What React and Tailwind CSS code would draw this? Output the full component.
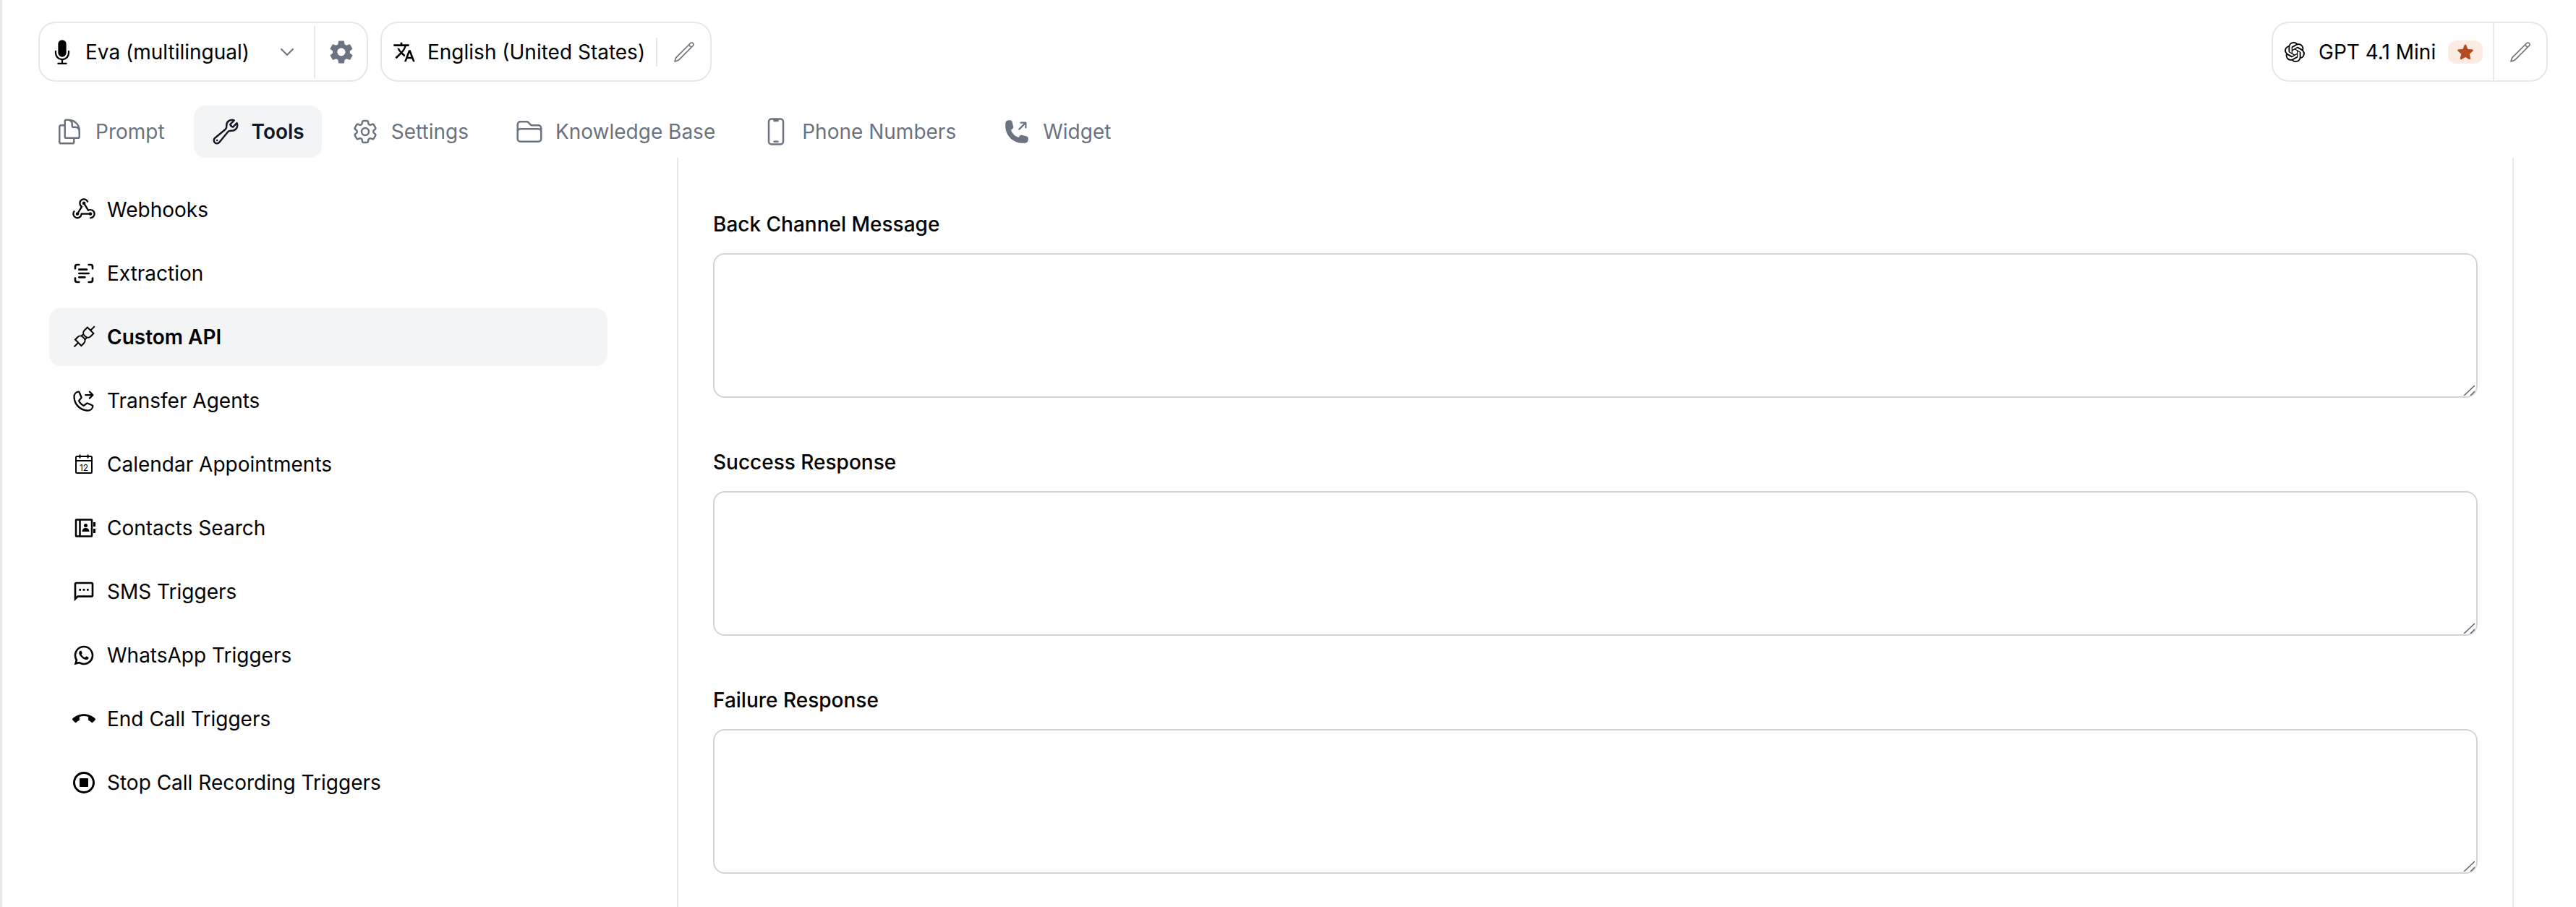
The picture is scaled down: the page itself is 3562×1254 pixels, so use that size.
import {
  HiOutlineDocumentDuplicate,
  HiOutlineWrench,
  HiOutlineCog6Tooth,
  HiOutlineFolder,
  HiOutlineDevicePhoneMobile,
  HiPhoneArrowUpRight,
  HiMicrophone,
  HiStar,
  HiOutlinePencil,
} from "react-icons/hi2";
import { IoMdSettings } from "react-icons/io";
import { MdOutlineTranslate, MdOutlineSms, MdCallEnd } from "react-icons/md";
import { RiWhatsappLine } from "react-icons/ri";
import { SiOpenai } from "react-icons/si";
import { PiWebhooksLogo, PiPhoneTransfer } from "react-icons/pi";
import { ChevronDown, ScanText } from "lucide-react";

function PlugsIcon() {
  return (
    <svg viewBox="0 0 32 32" className="w-8 h-8" fill="none" stroke="currentColor" strokeWidth="2">
      <g transform="rotate(-45 16 16)">
        <path d="M-3 16h8M29 16H37" />
        <path d="M5 10h5a5 5 0 0 1 5 5v2a5 5 0 0 1-5 5H5zM15 12.500h3M15 19.500h3" />
        <path d="M29 10h-6a5 5 0 0 0-5 5v2a5 5 0 0 0 5 5h6z" />
      </g>
    </svg>
  );
}

function CalendarIcon() {
  return (
    <svg viewBox="0 0 32 32" className="w-8 h-8" fill="none" stroke="currentColor" strokeWidth="2">
      <rect x="5" y="5" width="22" height="23" rx="1.5" />
      <path d="M5 11h22M10.500 2.500v5M21.500 2.500v5" />
      <text x="16" y="25" textAnchor="middle" fontSize="12" fontFamily="Inter" fill="currentColor" stroke="none">
        12
      </text>
    </svg>
  );
}

function ContactsIcon() {
  return (
    <svg viewBox="0 0 32 32" className="w-8 h-8" fill="none" stroke="currentColor" strokeWidth="2.500">
      <rect x="5" y="4.500" width="22" height="23" rx="0.500" />
      <path d="M10.500 4.500v23" />
      <circle cx="18.500" cy="12.500" r="2.500" fill="currentColor" stroke="none" />
      <path d="M13.500 21c0-3 2-5 5-5s5 2 5 5z" fill="currentColor" stroke="none" />
      <path d="M30.500 8v6M30.500 17v6" strokeWidth="3" />
    </svg>
  );
}

function StopIcon() {
  return (
    <svg viewBox="0 0 32 32" className="w-8 h-8">
      <circle cx="16" cy="16" r="13.500" fill="none" stroke="currentColor" strokeWidth="3" />
      <rect x="10" y="10" width="12" height="12" rx="1" fill="currentColor" />
    </svg>
  );
}

const tabs = [
  { label: "Prompt", icon: HiOutlineDocumentDuplicate },
  { label: "Tools", icon: HiOutlineWrench, active: true },
  { label: "Settings", icon: HiOutlineCog6Tooth },
  { label: "Knowledge Base", icon: HiOutlineFolder },
  { label: "Phone Numbers", icon: HiOutlineDevicePhoneMobile },
  { label: "Widget", icon: HiPhoneArrowUpRight, small: true },
];

const tools = [
  { label: "Webhooks", icon: <PiWebhooksLogo size={36} className="-m-0.5" /> },
  { label: "Extraction", icon: <ScanText size={32} strokeWidth={2} /> },
  { label: "Custom API", icon: <PlugsIcon />, active: true },
  { label: "Transfer Agents", icon: <PiPhoneTransfer size={36} className="-m-0.5" /> },
  { label: "Calendar Appointments", icon: <CalendarIcon /> },
  { label: "Contacts Search", icon: <ContactsIcon /> },
  { label: "SMS Triggers", icon: <MdOutlineSms size={32} /> },
  { label: "WhatsApp Triggers", icon: <RiWhatsappLine size={32} /> },
  { label: "End Call Triggers", icon: <MdCallEnd size={32} /> },
  { label: "Stop Call Recording Triggers", icon: <StopIcon /> },
];

const fields = ["Back Channel Message", "Success Response", "Failure Response"];

export default function App() {
  return (
    <div className="h-[1254px] overflow-hidden flex flex-col bg-white text-black border-l-[3px] border-[#e5e7eb] font-['Inter',sans-serif] text-[28px] leading-[40px] whitespace-nowrap">
      {/* top bar */}
      <div className="flex justify-between pt-[30px] pl-[50px] pr-[39px]">
        <div className="flex gap-[17px]">
          <div className="w-[456px] h-[83px] flex items-center rounded-[24px] border-2 border-[#e5e7eb]">
            <div className="w-[379px] flex items-center pl-[13px] pr-[21px]">
              <HiMicrophone size={36} className="shrink-0" />
              <span className="ml-[14px]">Eva (multilingual)</span>
              <ChevronDown size={32} strokeWidth={1.5} className="ml-auto shrink-0 text-[#6b7280]" />
            </div>
            <div className="w-0.5 h-[72px] bg-[#e5e7eb]" />
            <div className="flex-1 flex justify-center text-[#6b7280]">
              <IoMdSettings size={38} />
            </div>
          </div>
          <div className="w-[458px] h-[83px] flex items-center rounded-[24px] border-2 border-[#e5e7eb]">
            <div className="flex-1 flex items-center pl-[15px]">
              <MdOutlineTranslate size={32} className="shrink-0" />
              <span className="ml-[16px]">English (United States)</span>
            </div>
            <div className="w-0.5 h-10 bg-[#e5e7eb]" />
            <div className="w-[73px] flex justify-center text-[#71717a]">
              <HiOutlinePencil size={32} strokeWidth={1.25} />
            </div>
          </div>
        </div>
        <div className="w-[382px] h-[83px] flex items-stretch rounded-[24px] border-2 border-[#e5e7eb]">
          <div className="flex-1 flex items-center pl-[16px]">
            <SiOpenai size={28} />
            <span className="ml-[19px]">GPT 4.1 Mini</span>
            <span className="ml-[17px] w-12 h-8 flex items-center justify-center rounded-xl bg-[#fcebe2] text-[#b54b25]">
              <HiStar size={26} />
            </span>
          </div>
          <div className="w-0.5 bg-[#e5e7eb]" />
          <div className="w-[72px] flex items-center justify-center text-[#71717a]">
            <HiOutlinePencil size={32} strokeWidth={1.25} />
          </div>
        </div>
      </div>

      {/* tabs */}
      <div className="flex gap-4 mt-[33px] pl-[49px]">
        {tabs.map((tab) => {
          const Icon = tab.icon;
          return (
            <div
              key={tab.label}
              className={
                tab.active
                  ? "h-[72px] flex items-center gap-4 px-6 rounded-2xl bg-[#f3f4f6] font-semibold text-[#111827]"
                  : "h-[72px] flex items-center gap-4 px-6 rounded-2xl text-[#6b7280]"
              }
            >
              <span className="w-10 h-10 flex items-center justify-center">
                <Icon size={tab.small ? 36 : 40} />
              </span>
              {tab.label}
            </div>
          );
        })}
      </div>

      {/* content */}
      <div className="flex-1 flex min-h-0">
        <div className="w-[935px] border-r-2 border-[#e5e7eb] pt-8 pl-[65px] pr-[96px] flex flex-col gap-2">
          {tools.map((tool) => (
            <div
              key={tool.label}
              className={
                tool.active
                  ? "h-20 shrink-0 flex items-center gap-4 pl-8 rounded-2xl bg-[#f3f4f6] font-semibold"
                  : "h-20 shrink-0 flex items-center gap-4 pl-8 rounded-2xl"
              }
            >
              {tool.icon}
              {tool.label}
            </div>
          ))}
        </div>
        <div className="w-[2538px] border-r-2 border-[#e5e7eb] pt-[72px] px-[48px] flex flex-col gap-[69px]">
          {fields.map((label) => (
            <div key={label} className="flex flex-col gap-5">
              <label className="font-medium">{label}</label>
              <div className="relative h-[200px]">
                <textarea className="block h-full w-full resize-none rounded-2xl border-2 border-[#d1d5db]" />
                {/* resize grip */}
                <svg viewBox="0 0 16 16" className="absolute right-1 bottom-[3px] w-4 h-4" stroke="#5f6368" strokeWidth="1.500">
                  <path d="M1 16 16 2M10 16l6-6" />
                </svg>
              </div>
            </div>
          ))}
        </div>
      </div>
    </div>
  );
}
